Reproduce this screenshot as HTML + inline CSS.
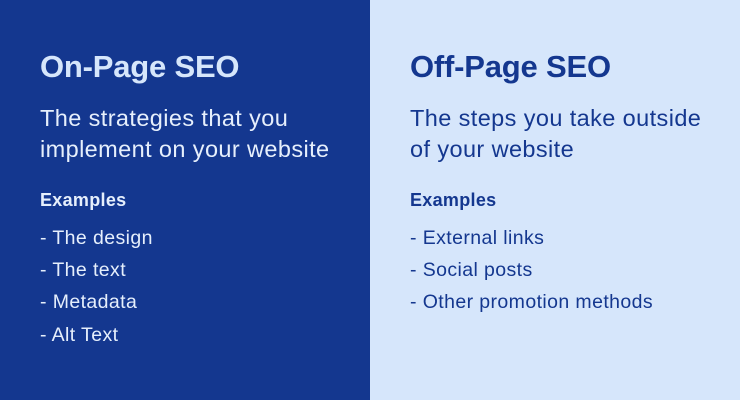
<!DOCTYPE html>
<html><head><style>
body{margin:0;width:740px;height:400px;overflow:hidden;font-family:"Liberation Sans",sans-serif;}
.p{position:absolute;top:0;height:400px;}
.l{left:0;width:370px;background:#14378f;color:#e6effc;}
.r{left:370px;width:370px;background:#d6e6fb;color:#14378f;}
.t{position:absolute;left:40px;top:49px;font-size:31px;font-weight:bold;letter-spacing:-0.2px;white-space:nowrap;}
.l .t{color:#d6e6fb}
.s{position:absolute;left:40px;top:103px;font-size:23.5px;letter-spacing:0.4px;line-height:31px;white-space:nowrap;}
.e{position:absolute;left:40px;top:190px;font-size:18px;letter-spacing:0.3px;font-weight:bold;}
.li{position:absolute;left:40px;font-size:19.5px;letter-spacing:0.4px;white-space:nowrap;}
</style></head><body>
<div class="p l">
<div class="t">On-Page SEO</div>
<div class="s">The strategies that you<br>implement on your website</div>
<div class="e">Examples</div>
<div class="li" style="top:227px">- The design</div>
<div class="li" style="top:259px">- The text</div>
<div class="li" style="top:291px">- Metadata</div>
<div class="li" style="top:324px">- Alt Text</div>
</div>
<div class="p r">
<div class="t">Off-Page SEO</div>
<div class="s">The steps you take outside<br>of your website</div>
<div class="e">Examples</div>
<div class="li" style="top:227px">- External links</div>
<div class="li" style="top:259px">- Social posts</div>
<div class="li" style="top:291px">- Other promotion methods</div>
</div>
</body></html>
